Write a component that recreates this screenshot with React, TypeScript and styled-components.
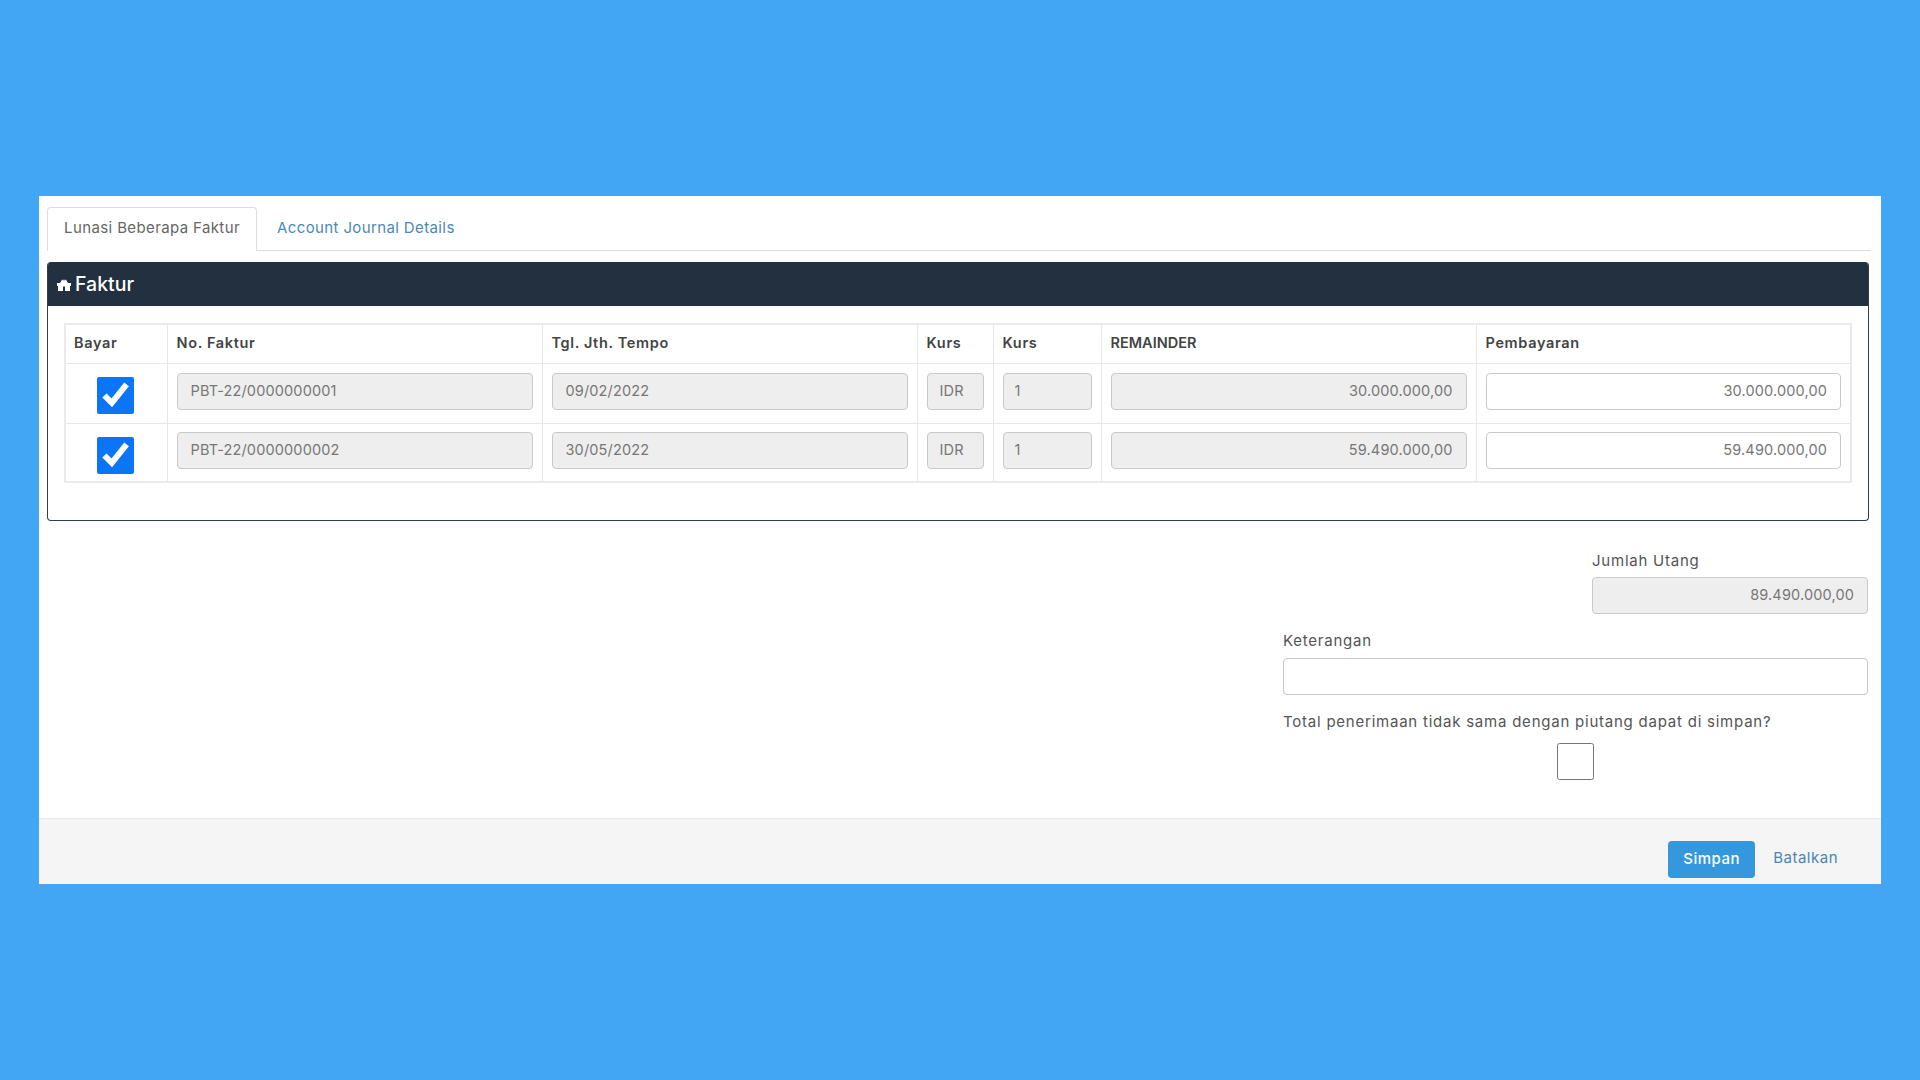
import React from "react";
import styled, { createGlobalStyle } from "styled-components";

const FONT = `Inter, "Open Sans", "Liberation Sans", sans-serif`;

const Global = createGlobalStyle`
  html, body { margin: 0; padding: 0; background: #42a6f5; }
  body { font-family: ${FONT}; }
`;

const Page = styled.div`
  width: 1920px;
  height: 1080px;
  box-sizing: border-box;
  padding: 196px 39px 0;
  background: #42a6f5;
  overflow: hidden;
`;

const Modal = styled.div`
  width: 1842px;
  height: 688px;
  background: #fff;
  display: flex;
  flex-direction: column;
`;

const Body = styled.div`
  flex: 1;
  padding: 11px 12px 0 8px;
`;

const Tabs = styled.div`
  display: flex;
  height: 44px;
  box-sizing: border-box;
  border-bottom: 1px solid #ddd;
  width: 1824px;
`;

const Tab = styled.div<{ $active?: boolean }>`
  box-sizing: border-box;
  height: 44px;
  display: flex;
  align-items: center;
  padding: 0 16px 4px;
  font-size: 15px;
  letter-spacing: 0.38px;
  color: ${(p) => (p.$active ? "#666" : "#4a89b8")};
  ${(p) =>
    p.$active
      ? `background:#fff;border:1px solid #ddd;border-bottom:none;border-radius:4px 4px 0 0;width:210px;justify-content:center;padding:0 0 4px;`
      : `margin-left:4px;`}
`;

const Panel = styled.section`
  margin-top: 11px;
  width: 1822px;
  height: 259px;
  box-sizing: border-box;
  border: 1px solid #2b3f50;
  border-top: none;
  border-radius: 4px;
  overflow: hidden;
`;

const PanelHead = styled.div`
  height: 44px;
  margin: 0 -1px;
  background: #22303f;
  color: #fff;
  display: flex;
  align-items: center;
  gap: 4px;
  padding-left: 10px;
  font-size: 19.5px;
  font-weight: 500;
`;

const GiftIcon = styled.svg`
  width: 14px;
  height: 12px;
  margin-top: 2px;
  fill: #fff;
`;

const PanelBody = styled.div`
  padding: 17px 18px 0 16px;
`;

const Table = styled.table`
  table-layout: fixed;
  border-collapse: collapse;
  width: 1786px;
  border: 2px solid #eaeaea;
`;

const Col = styled.col<{ $w: number }>`
  width: ${(p) => p.$w}px;
`;

const Th = styled.th<{ $tight?: boolean }>`
  height: 39px;
  box-sizing: border-box;
  padding: 0 9px 2px;
  text-align: left;
  font-size: 14.5px;
  font-weight: 600;
  letter-spacing: ${(p) => (p.$tight ? 0 : 0.65)}px;
  color: #444;
  border: 1px solid #e7e7e7;
  &:first-child { padding-left: 8px; }
`;

const Td = styled.td<{ $h: number; $top: number }>`
  height: ${(p) => p.$h}px;
  box-sizing: border-box;
  padding: ${(p) => p.$top}px 9px 0;
  vertical-align: top;
  border: 1px solid #e7e7e7;
`;

const CheckCell = styled(Td)`
  text-align: center;
  padding: 13px 2px 0 0;
`;

const Input = styled.input<{ $right?: boolean; $disabled?: boolean; $pad?: number }>`
  display: block;
  width: 100%;
  height: 37px;
  box-sizing: border-box;
  border: 1px solid #c9c9c9;
  border-radius: 4px;
  background: ${(p) => (p.$disabled ? "#eeeeee" : "#fff")};
  color: #777;
  font-family: ${FONT};
  font-size: 14.5px;
  letter-spacing: 0.15px;
  padding: 0 ${(p) => p.$pad ?? 13}px 2px;
  text-align: ${(p) => (p.$right ? "right" : "left")};
  outline: none;
`;

const Check = styled.input`
  width: 37px;
  height: 37px;
  margin: 0;
  vertical-align: top;
  accent-color: #0a76f6;
`;

const Form = styled.div`
  width: 585px;
  margin: 30px 0 0 1236px;
  display: flex;
  flex-direction: column;
`;

const Group = styled.div<{ $w?: number; $mt?: number }>`
  width: ${(p) => (p.$w ? `${p.$w}px` : "100%")};
  align-self: flex-end;
  margin-top: ${(p) => p.$mt ?? 0}px;
`;

const Label = styled.div<{ $mb?: number }>`
  height: 20px;
  line-height: 20px;
  font-size: 15px;
  letter-spacing: 0.77px;
  color: #555;
  margin-bottom: ${(p) => p.$mb ?? 6}px;
`;

const CenterCheck = styled.div`
  display: flex;
  justify-content: center;
  input { accent-color: #767676; }
`;

const Footer = styled.div`
  height: 66px;
  box-sizing: border-box;
  background: #f5f5f5;
  border-top: 1px solid #e7ecf1;
  display: flex;
  justify-content: flex-end;
  align-items: flex-start;
  padding: 22px 43px 0 0;
`;

const SaveBtn = styled.button`
  width: 87px;
  height: 37px;
  border: none;
  border-radius: 4px;
  padding: 0 0 3px;
  background: #3598dc;
  color: #fff;
  font-family: ${FONT};
  font-size: 15px;
  font-weight: 500;
  letter-spacing: 0.5px;
`;

const CancelLink = styled.a`
  margin-left: 18px;
  height: 34px;
  line-height: 34px;
  font-size: 15px;
  letter-spacing: 0.5px;
  color: #4a86b8;
`;

const cols = [102, 375, 375, 76, 108, 375, 375];
const heads = ["Bayar", "No. Faktur", "Tgl. Jth. Tempo", "Kurs", "Kurs", "REMAINDER", "Pembayaran"];
const rows = [
  { h: 60, top: 9, no: "PBT-22/0000000001", date: "09/02/2022", rem: "30.000.000,00" },
  { h: 59, top: 8, no: "PBT-22/0000000002", date: "30/05/2022", rem: "59.490.000,00" },
];

export default function App() {
  return (
    <Page>
      <Global />
      <Modal>
        <Body>
          <Tabs>
            <Tab $active>Lunasi Beberapa Faktur</Tab>
            <Tab>Account Journal Details</Tab>
          </Tabs>
          <Panel>
            <PanelHead>
              <GiftIcon viewBox="0 0 14 12">
                <path d="M3 4 5 .8h1.5L7 2.2 7.5.8H9L11 4h3v3h-1v5H8V7.5H6V12H1V7H0V4Z" />
              </GiftIcon>
              Faktur
            </PanelHead>
            <PanelBody>
              <Table>
                <colgroup>
                  {cols.map((w, i) => (
                    <Col key={i} $w={w} />
                  ))}
                </colgroup>
                <thead>
                  <tr>
                    {heads.map((h, i) => (
                      <Th key={i} $tight={h === "REMAINDER"}>
                        {h}
                      </Th>
                    ))}
                  </tr>
                </thead>
                <tbody>
                  {rows.map((r) => (
                    <tr key={r.no}>
                      <CheckCell $h={r.h} $top={r.top}>
                        <Check type="checkbox" checked readOnly />
                      </CheckCell>
                      <Td $h={r.h} $top={r.top}>
                        <Input $disabled readOnly value={r.no} />
                      </Td>
                      <Td $h={r.h} $top={r.top}>
                        <Input $disabled readOnly value={r.date} />
                      </Td>
                      <Td $h={r.h} $top={r.top}>
                        <Input $disabled readOnly value="IDR" $pad={12} />
                      </Td>
                      <Td $h={r.h} $top={r.top}>
                        <Input $disabled readOnly value="1" $pad={11} />
                      </Td>
                      <Td $h={r.h} $top={r.top}>
                        <Input $disabled $right readOnly value={r.rem} />
                      </Td>
                      <Td $h={r.h} $top={r.top}>
                        <Input $right readOnly value={r.rem} />
                      </Td>
                    </tr>
                  ))}
                </tbody>
              </Table>
            </PanelBody>
          </Panel>
          <Form>
            <Group $w={276}>
              <Label>Jumlah Utang</Label>
              <Input $disabled $right readOnly value="89.490.000,00" />
            </Group>
            <Group $mt={17}>
              <Label $mb={7}>Keterangan</Label>
              <Input readOnly value="" />
            </Group>
            <Group $mt={17}>
              <Label $mb={11}>Total penerimaan tidak sama dengan piutang dapat di simpan?</Label>
              <CenterCheck>
                <Check type="checkbox" readOnly />
              </CenterCheck>
            </Group>
          </Form>
        </Body>
        <Footer>
          <SaveBtn>Simpan</SaveBtn>
          <CancelLink>Batalkan</CancelLink>
        </Footer>
      </Modal>
    </Page>
  );
}
